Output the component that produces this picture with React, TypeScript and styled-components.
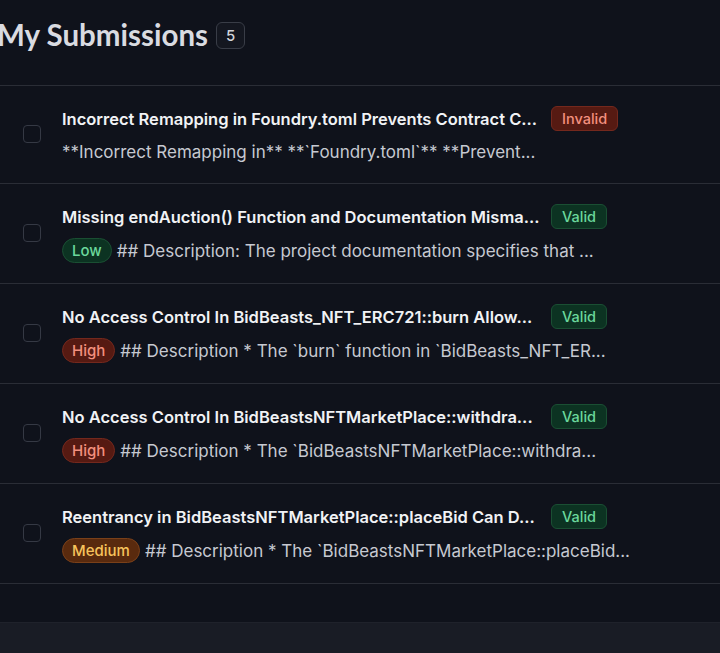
import React from "react";
import styled, { createGlobalStyle, css } from "styled-components";

const GlobalStyle = createGlobalStyle`
  html, body { margin: 0; padding: 0; background: #0f121b; }
  body { font-family: Inter, "Noto Sans", sans-serif; overflow: hidden; -webkit-font-smoothing: antialiased; }
  * { box-sizing: border-box; }
`;

type Tone = "red" | "green" | "amber";

const tones: Record<Tone, { bg: string; border: string; fg: string }> = {
  red: { bg: "#561a12", border: "#74281d", fg: "#f3907e" },
  green: { bg: "#0c3322", border: "#1a4f33", fg: "#6bd89c" },
  amber: { bg: "#592a0e", border: "#7a4019", fg: "#f7c35c" },
};

const Page = styled.div`
  width: 720px;
  height: 653px;
  display: flex;
  flex-direction: column;
  background: #0f121b;
`;

const Header = styled.header`
  height: 86px;
  display: flex;
  align-items: flex-start;
  gap: 8px;
  padding-top: 17px;
  margin-left: -3px;
  border-bottom: 1px solid #2a2d36;
`;

const Heading = styled.h1`
  margin: 0;
  font-family: Lato, Inter, sans-serif;
  font-size: 29.5px;
  line-height: 36px;
  font-weight: 700;
  color: #d9dbe1;
`;

const CountBadge = styled.span`
  margin-top: 5px;
  width: 29px;
  height: 27px;
  display: flex;
  align-items: center;
  justify-content: center;
  border: 1px solid #393d47;
  border-radius: 6px;
  background: #141720;
  color: #d2d4da;
  font-size: 15px;
  font-weight: 500;
`;

const List = styled.ul`
  margin: 0;
  padding: 0;
  list-style: none;
`;

const Row = styled.li`
  display: flex;
  align-items: center;
  gap: 21px;
  padding: 20px 0 20px 23px;
  border-bottom: 1px solid #2a2d36;
`;

const Checkbox = styled.span`
  flex: none;
  width: 18px;
  height: 18px;
  border: 1.5px solid #353944;
  border-radius: 4px;
  margin-top: -1px;
`;

const Content = styled.div`
  display: flex;
  flex-direction: column;
  gap: 8px;
  min-width: 0;
`;

const TitleLine = styled.div`
  display: flex;
  align-items: center;
  gap: 8px;
  height: 25px;
`;

const Title = styled.span`
  width: 481px;
  white-space: nowrap;
  overflow: hidden;
  text-overflow: ellipsis;
  font-size: 16.5px;
  font-weight: 600;
  color: #f1f2f5;
`;

const StatusBadge = styled.span<{ $tone: Tone }>`
  flex: none;
  height: 25px;
  padding: 0 10px;
  display: inline-flex;
  align-items: center;
  border-radius: 6px;
  font-size: 14.5px;
  font-weight: 500;
  ${({ $tone }) => css`
    background: ${tones[$tone].bg};
    border: 1px solid ${tones[$tone].border};
    color: ${tones[$tone].fg};
  `}
`;

const DescLine = styled.div<{ $withPill: boolean }>`
  display: flex;
  align-items: center;
  gap: 5px;
  padding-top: 1px;
  height: ${({ $withPill }) => ($withPill ? 26 : 24)}px;
`;

const SeverityPill = styled.span<{ $tone: Tone }>`
  flex: none;
  height: 25px;
  padding: 0 9px;
  display: inline-flex;
  align-items: center;
  border-radius: 13px;
  font-size: 15px;
  font-weight: 500;
  ${({ $tone }) => css`
    background: ${tones[$tone].bg};
    border: 1px solid ${tones[$tone].border};
    color: ${tones[$tone].fg};
  `}
`;

const Desc = styled.span`
  white-space: nowrap;
  font-size: 17px;
  font-weight: 400;
  color: #c6c9d1;
`;

const Spacer = styled.div`
  height: 38px;
  flex: none;
`;

const Footer = styled.footer`
  flex: 1;
  background: #191c25;
  border-top: 1px solid #1f222b;
`;

type Item = {
  title: string;
  status: "Invalid" | "Valid";
  severity?: { label: string; tone: Tone };
  desc: string;
};

const items: Item[] = [
  {
    title: "Incorrect Remapping in Foundry.toml Prevents Contract C...",
    status: "Invalid",
    desc: "**Incorrect Remapping in** **`Foundry.toml`** **Prevent...",
  },
  {
    title: "Missing endAuction() Function and Documentation Misma...",
    status: "Valid",
    severity: { label: "Low", tone: "green" },
    desc: "## Description: The project documentation specifies that ...",
  },
  {
    title: "No Access Control In BidBeasts_NFT_ERC721::burn Allow...",
    status: "Valid",
    severity: { label: "High", tone: "red" },
    desc: "## Description * The `burn` function in `BidBeasts_NFT_ER...",
  },
  {
    title: "No Access Control In BidBeastsNFTMarketPlace::withdra...",
    status: "Valid",
    severity: { label: "High", tone: "red" },
    desc: "## Description * The `BidBeastsNFTMarketPlace::withdra...",
  },
  {
    title: "Reentrancy in BidBeastsNFTMarketPlace::placeBid Can D...",
    status: "Valid",
    severity: { label: "Medium", tone: "amber" },
    desc: "## Description * The `BidBeastsNFTMarketPlace::placeBid...",
  },
];

export default function App() {
  return (
    <Page>
      <GlobalStyle />
      <Header>
        <Heading>My Submissions</Heading>
        <CountBadge>5</CountBadge>
      </Header>
      <List>
        {items.map((it) => (
          <Row key={it.title}>
            <Checkbox />
            <Content>
              <TitleLine>
                <Title>{it.title}</Title>
                <StatusBadge $tone={it.status === "Invalid" ? "red" : "green"}>{it.status}</StatusBadge>
              </TitleLine>
              <DescLine $withPill={!!it.severity}>
                {it.severity && <SeverityPill $tone={it.severity.tone}>{it.severity.label}</SeverityPill>}
                <Desc>{it.desc}</Desc>
              </DescLine>
            </Content>
          </Row>
        ))}
      </List>
      <Spacer />
      <Footer />
    </Page>
  );
}
